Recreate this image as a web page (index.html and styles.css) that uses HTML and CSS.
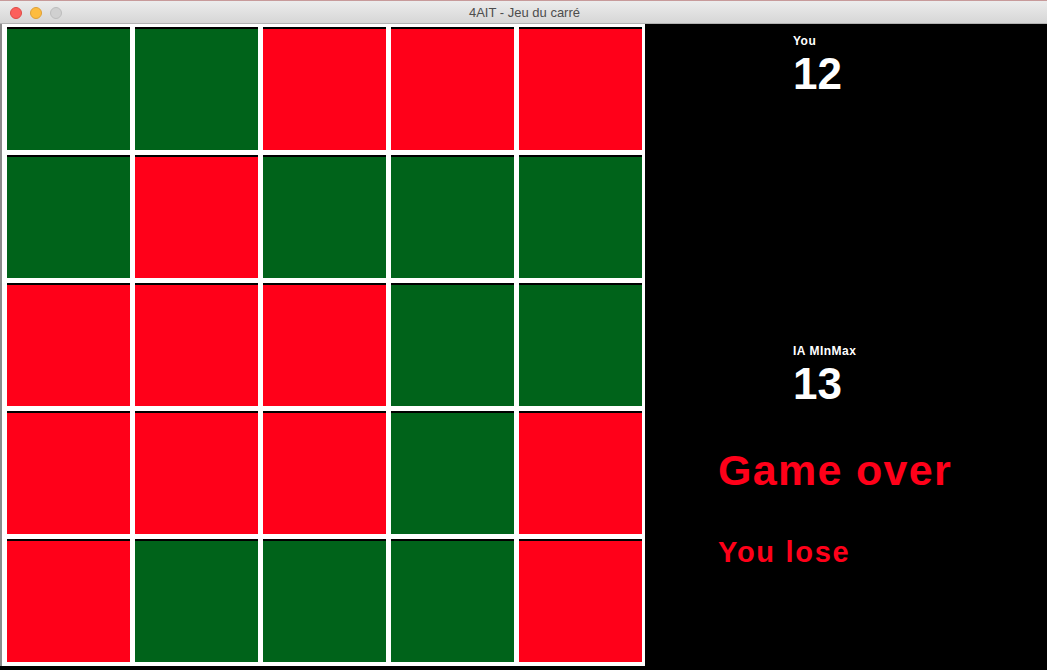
FILE: index.html
```html
<!DOCTYPE html>
<html>
<head>
<meta charset="utf-8">
<title>4AIT - Jeu du carré</title>
<link rel="stylesheet" href="styles.css">
</head>
<body>
<div class="window">
  <div class="titlebar">
    <div class="lights">
      <span class="light close"></span>
      <span class="light min"></span>
      <span class="light max"></span>
    </div>
    <div class="title">4AIT - Jeu du carré</div>
  </div>
  <div class="content">
    <div class="board">
      <div class="grid">
        <div class="cell g"></div><div class="cell g"></div><div class="cell r"></div><div class="cell r"></div><div class="cell r"></div>
        <div class="cell g"></div><div class="cell r"></div><div class="cell g"></div><div class="cell g"></div><div class="cell g"></div>
        <div class="cell r"></div><div class="cell r"></div><div class="cell r"></div><div class="cell g"></div><div class="cell g"></div>
        <div class="cell r"></div><div class="cell r"></div><div class="cell r"></div><div class="cell g"></div><div class="cell r"></div>
        <div class="cell r"></div><div class="cell g"></div><div class="cell g"></div><div class="cell g"></div><div class="cell r"></div>
      </div>
    </div>
    <div class="side">
      <div class="score first">
        <div class="label">You</div>
        <div class="value">12</div>
      </div>
      <div class="score second">
        <div class="label">IA MInMax</div>
        <div class="value">13</div>
      </div>
      <div class="result">
        <div class="over">Game over</div>
        <div class="lose">You lose</div>
      </div>
    </div>
  </div>
</div>
</body>
</html>
```

FILE: styles.css
```css
html, body {
  margin: 0;
  padding: 0;
  background: #000;
  width: 1047px;
  height: 670px;
  overflow: hidden;
  font-family: "Liberation Sans", Arial, sans-serif;
}

.window {
  display: flex;
  flex-direction: column;
  width: 1047px;
}

.titlebar {
  position: relative;
  background: linear-gradient(#ececec, #d6d6d6);
  border-top: 1px solid #c79a9a;
  border-bottom: 1px solid #b3b3b3;
  box-sizing: content-box;
  display: flex;
  align-items: center;
  justify-content: center;
  height: 22px;
}

.lights {
  position: absolute;
  left: 10px;
  top: 6px;
  display: flex;
  gap: 8px;
}

.light {
  width: 12px;
  height: 12px;
  border-radius: 50%;
  box-sizing: border-box;
}

.light.close { background: #fc605c; border: 1px solid #de4a45; }
.light.min { background: #fdbc40; border: 1px solid #dea036; }
.light.max { background: #d0d0d0; border: 1px solid #bdbdbd; }

.title {
  font-size: 13px;
  color: #4d4d4d;
  margin-left: 2px;
}

.content {
  display: flex;
  height: 646px;
}

.board {
  width: 645px;
  height: 642px;
  flex: none;
  background: #fff;
  border-left: 2px solid #8c8c8c;
  padding: 3px 0 0 5px;
  box-sizing: border-box;
}

.grid {
  display: grid;
  grid-template-columns: repeat(5, 123px);
  grid-template-rows: repeat(5, 123px);
  gap: 5px;
}

.cell {
  border-top: 2px solid #000;
  box-sizing: border-box;
}

.cell.g { background: #00631a; }
.cell.r { background: #ff0019; }

.side {
  flex: 1;
  background: #000;
  display: flex;
  flex-direction: column;
  color: #fff;
}

.score {
  padding-left: 148px;
  font-weight: bold;
}

.score.first { margin-top: 11px; }
.score.second { margin-top: 249px; }

.label {
  font-size: 12px;
  line-height: 12px;
  letter-spacing: 0.5px;
}

.value {
  font-size: 44px;
  line-height: 44px;
  margin-top: 5px;
}

.result {
  padding-left: 73px;
  margin-top: 43px;
  color: #ff0019;
  font-weight: bold;
}

.over {
  font-size: 43px;
  line-height: 43px;
  letter-spacing: 1.3px;
}

.lose {
  font-size: 29px;
  line-height: 29px;
  letter-spacing: 1.7px;
  margin-top: 46px;
}
```
